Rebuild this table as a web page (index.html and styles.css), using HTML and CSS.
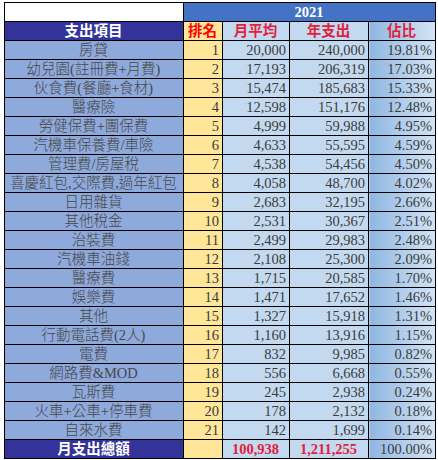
FILE: index.html
```html
<!DOCTYPE html>
<html lang="zh-Hant">
<head>
<meta charset="utf-8">
<title>支出</title>
<link rel="stylesheet" href="styles.css">
</head>
<body>
<table class="sheet">
  <colgroup>
    <col class="c-item"><col class="c-rank"><col class="c-month"><col class="c-year"><col class="c-ratio">
  </colgroup>
  <tr class="title-row">
    <td class="blank"></td>
    <td class="year-title" colspan="4">2021</td>
  </tr>
  <tr class="head-row">
    <td class="h-item">支出項目</td>
    <td class="h-rank">排名</td>
    <td class="h-num">月平均</td>
    <td class="h-num">年支出</td>
    <td class="h-ratio">佔比</td>
  </tr>
  <tr><td class="item">房貸</td><td class="rank">1</td><td class="num">20,000</td><td class="num">240,000</td><td class="ratio">19.81%</td></tr>
  <tr><td class="item">幼兒園(註冊費+月費)</td><td class="rank">2</td><td class="num">17,193</td><td class="num">206,319</td><td class="ratio">17.03%</td></tr>
  <tr><td class="item">伙食費(餐廳+食材)</td><td class="rank">3</td><td class="num">15,474</td><td class="num">185,683</td><td class="ratio">15.33%</td></tr>
  <tr><td class="item">醫療險</td><td class="rank">4</td><td class="num">12,598</td><td class="num">151,176</td><td class="ratio">12.48%</td></tr>
  <tr><td class="item">勞健保費+團保費</td><td class="rank">5</td><td class="num">4,999</td><td class="num">59,988</td><td class="ratio">4.95%</td></tr>
  <tr><td class="item">汽機車保養費/車險</td><td class="rank">6</td><td class="num">4,633</td><td class="num">55,595</td><td class="ratio">4.59%</td></tr>
  <tr><td class="item">管理費/房屋稅</td><td class="rank">7</td><td class="num">4,538</td><td class="num">54,456</td><td class="ratio">4.50%</td></tr>
  <tr><td class="item">喜慶紅包,交際費,過年紅包</td><td class="rank">8</td><td class="num">4,058</td><td class="num">48,700</td><td class="ratio">4.02%</td></tr>
  <tr><td class="item">日用雜貨</td><td class="rank">9</td><td class="num">2,683</td><td class="num">32,195</td><td class="ratio">2.66%</td></tr>
  <tr><td class="item">其他稅金</td><td class="rank">10</td><td class="num">2,531</td><td class="num">30,367</td><td class="ratio">2.51%</td></tr>
  <tr><td class="item">治裝費</td><td class="rank">11</td><td class="num">2,499</td><td class="num">29,983</td><td class="ratio">2.48%</td></tr>
  <tr><td class="item">汽機車油錢</td><td class="rank">12</td><td class="num">2,108</td><td class="num">25,300</td><td class="ratio">2.09%</td></tr>
  <tr><td class="item">醫療費</td><td class="rank">13</td><td class="num">1,715</td><td class="num">20,585</td><td class="ratio">1.70%</td></tr>
  <tr><td class="item">娛樂費</td><td class="rank">14</td><td class="num">1,471</td><td class="num">17,652</td><td class="ratio">1.46%</td></tr>
  <tr><td class="item">其他</td><td class="rank">15</td><td class="num">1,327</td><td class="num">15,918</td><td class="ratio">1.31%</td></tr>
  <tr><td class="item">行動電話費(2人)</td><td class="rank">16</td><td class="num">1,160</td><td class="num">13,916</td><td class="ratio">1.15%</td></tr>
  <tr><td class="item">電費</td><td class="rank">17</td><td class="num">832</td><td class="num">9,985</td><td class="ratio">0.82%</td></tr>
  <tr><td class="item">網路費&amp;MOD</td><td class="rank">18</td><td class="num">556</td><td class="num">6,668</td><td class="ratio">0.55%</td></tr>
  <tr><td class="item">瓦斯費</td><td class="rank">19</td><td class="num">245</td><td class="num">2,938</td><td class="ratio">0.24%</td></tr>
  <tr><td class="item">火車+公車+停車費</td><td class="rank">20</td><td class="num">178</td><td class="num">2,132</td><td class="ratio">0.18%</td></tr>
  <tr><td class="item">自來水費</td><td class="rank">21</td><td class="num">142</td><td class="num">1,699</td><td class="ratio">0.14%</td></tr>
  <tr class="total-row">
    <td class="h-item">月支出總額</td>
    <td class="rank"></td>
    <td class="num total">100,938</td>
    <td class="num total">1,211,255</td>
    <td class="ratio">100.00%</td>
  </tr>
</table>
</body>
</html>
```
FILE: styles.css
```css
html, body {
  margin: 0;
  padding: 0;
  background: #ffffff;
}

body {
  font-family: "Liberation Serif", "Noto Sans CJK TC", serif;
  color: #3c3c3c;
}

.sheet {
  margin: 2px 0 0 4px;
  border-collapse: collapse;
  table-layout: fixed;
  width: 431px;
}

.c-item { width: 179px; }
.c-rank { width: 39px; }
.c-month { width: 67px; }
.c-year { width: 79px; }
.c-ratio { width: 67px; }

.sheet tr {
  height: 19px;
}

.sheet td {
  border: 1px solid #000;
  height: 17px;
  padding: 0 3px 0 2px;
  font-size: 14.5px;
  line-height: 16px;
  white-space: nowrap;
  overflow: hidden;
}

.title-row .blank {
  background: #ffffff;
}

.year-title {
  background: #4472c4;
  color: #ffffff;
  font-weight: bold;
  text-align: center;
  font-size: 15px;
}

.h-item {
  background: #333399;
  color: #ffffff;
  font-weight: bold;
  text-align: center;
  font-size: 15px;
}

.h-rank {
  background: #ffe699;
  color: #ff0000;
  font-weight: bold;
  text-align: center;
  font-size: 15px;
}

.h-num {
  background: #c3d9ef;
  color: #e3203c;
  font-weight: bold;
  text-align: center;
  font-size: 15px;
}

.h-ratio {
  background: linear-gradient(to right, #8fb6e2, #d3e4f5);
  color: #e3203c;
  font-weight: bold;
  text-align: center;
  font-size: 15px;
}

.item {
  background: #8ea9db;
  text-align: center;
  font-size: 15px;
  font-weight: 300;
  color: #474747;
}

.rank {
  background: #ffe699;
  text-align: right;
}

.num {
  background: #c3d9ef;
  text-align: right;
}

.ratio {
  background: linear-gradient(to right, #8fb6e2, #d3e4f5);
  text-align: right;
}

.total {
  color: #e3203c;
  font-weight: bold;
  text-align: center;
}
```
